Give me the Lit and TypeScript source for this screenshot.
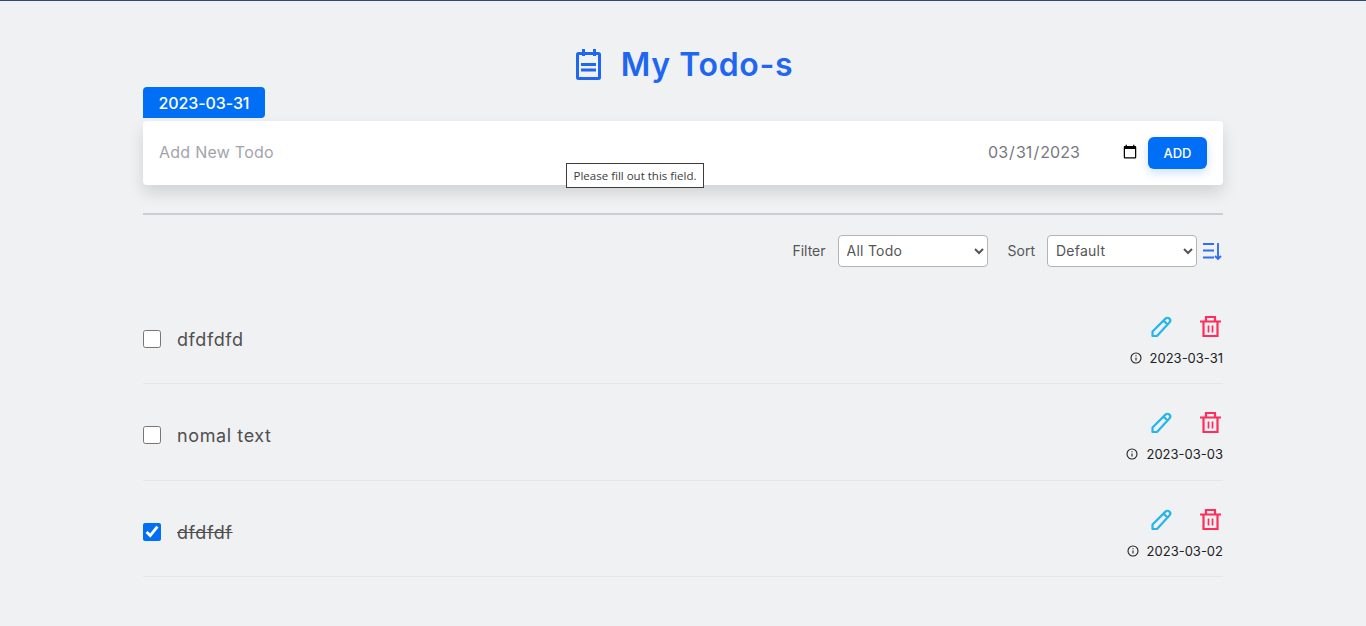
import { LitElement, html, css } from "lit";
import { customElement } from "lit/decorators.js";

const todos = [
  { text: "dfdfdfd", date: "2023-03-31", done: false },
  { text: "nomal text", date: "2023-03-03", done: false },
  { text: "dfdfdf", date: "2023-03-02", done: true },
];

@customElement("app-root")
export class AppRoot extends LitElement {
  static styles = css`
    :host {
      display: block;
      min-height: 626px;
      box-sizing: border-box;
      background: #eff1f3;
      border-top: 1px solid #2a4b78;
      font-family: Inter, "Open Sans", sans-serif;
      color: #4b4b4b;
      overflow: hidden;
    }
    * { box-sizing: border-box; }
    .wrap { width: 1080px; margin: 0 auto; position: relative; }
    h1 {
      margin: 0;
      height: 86px;
      padding-top: 41px;
      display: flex;
      justify-content: center;
      align-items: center;
      gap: 18px;
      padding-left: 2px;
      color: #1f67f0;
      font-size: 32px;
      font-weight: 600;
      line-height: 46px;
      letter-spacing: 0.65px;
    }
    h1 svg { width: 28px; height: 32px; margin-top: -1px; display: block; }
    .tag {
      display: flex; align-items: center; justify-content: center;
      width: 122px; height: 31px;
      background: #006ef5; color: #fff;
      border-radius: 4px 4px 4px 0;
      font-size: 16px; font-weight: 500;
      letter-spacing: -.1px;
    }
    .card {
      margin-top: 3px;
      height: 64px;
      background: #fff;
      border-radius: 4px;
      box-shadow: 0 8px 16px rgba(0,0,0,.13);
      display: flex; align-items: center;
      padding: 0 16px;
    }
    .new {
      flex: 1; border: 0; outline: 0; background: none; font: inherit; font-size: 16px;
      padding: 0 0 2px; letter-spacing: .25px;
    }
    .new::placeholder { color: #a3a3ad; }
    .date {
      width: 160px; border: 0; outline: 0; background: none;
      font: inherit; font-size: 16px; color: #77777f; padding: 0 0 2px 7px; margin-right: 8px; letter-spacing: .05px;
    }
    .add {
      width: 59px; height: 32px; border: 0; border-radius: 6px;
      background: #006ef5; color: #fff; font: inherit; font-size: 13px; font-weight: 500;
      box-shadow: 0 4px 10px rgba(0,110,245,.2);
    }
    .tip {
      position: absolute; left: 423px; top: 162px;
      width: 138px; height: 25px;
      background: #fff; border: 1px solid #3c3c3c;
      font-family: "Open Sans", sans-serif; font-size: 11.5px; color: #3c3c3c;
      display: flex; align-items: center; justify-content: center;
      white-space: nowrap;
    }
    hr { margin: 28px 0 0; border: 0; height: 2px; background: #cbcdd0; }
    .filters {
      margin-top: 20px; height: 32px;
      display: flex; align-items: center; justify-content: flex-end;
      font-size: 14px;
    }
    .filters label { margin-right: 12px; color: #555; padding-bottom: 2px; }
    select {
      width: 150px; height: 32px; background: #fff; color: #555;
      border: 1px solid #b4b4b4; border-radius: 4px;
      font: inherit; font-size: 14px; padding: 0 4px 1px; letter-spacing: .25px;
    }
    .f1 { margin-right: 20px; }
    .sorticon { width: 20px; height: 20px; margin-left: 6px; color: #2f6ff0; display: block; }
    ul { list-style: none; margin: 20px 0 0; padding: 0; }
    li {
      height: 97px; padding-top: 8px; border-bottom: 1px solid #e4e6e8;
      display: flex; align-items: center; justify-content: space-between;
    }
    li:nth-child(2) { padding-top: 6px; }
    li:nth-child(3) { height: 96px; padding-top: 7px; }
    .left { display: flex; align-items: center; gap: 16px; font-size: 18px; color: #4f4f4f; margin-top: 1px; letter-spacing: .6px; }
    input[type=checkbox] { width: 18px; height: 18px; margin: 0 0 2px; accent-color: #006ef5; }
    .done { text-decoration: line-through; }
    .right { display: flex; flex-direction: column; align-items: flex-end; gap: 11px; margin-top: 3px; }
    .acts { display: flex; gap: 26px; }
    .acts svg { width: 24px; height: 24px; display: block; }
    .pen { color: #27b5e8; }
    .trash { color: #ff2d5b; }
    .when { display: flex; align-items: center; gap: 8px; font-size: 13px; color: #222; }
    .when svg { width: 12px; height: 12px; display: block; }
  `;

  render() {
    return html`
      <div class="wrap">
        <h1>
          <svg viewBox="0 0 28 32" fill="none" stroke="currentColor" stroke-width="3">
            <rect x="2.5" y="5.5" width="22" height="25" rx="1"/>
            <path d="M8.5 1v7M19.5 1v7M6 16.5h15M6 22h15"/>
          </svg>
          My Todo-s
        </h1>
        <div class="tag">2023-03-31</div>
        <div class="card">
          <input class="new" placeholder="Add New Todo" />
          <input class="date" type="date" value="2023-03-31" />
          <button class="add">ADD</button>
        </div>
        <div class="tip">Please fill out this field.</div>
        <hr />
        <div class="filters">
          <label>Filter</label>
          <select class="f1"><option>All Todo</option></select>
          <label>Sort</label>
          <select><option>Default</option></select>
          <svg class="sorticon" viewBox="0 0 20 20" fill="none" stroke="currentColor" stroke-width="1.9">
            <path d="M0 3h11M0 9.5h11M0 16.5h11M15 2v16M12 15l3 3 3-3"/>
          </svg>
        </div>
        <ul>
          ${todos.map((t) => html`
            <li>
              <div class="left">
                <input type="checkbox" .checked=${t.done} />
                <span class=${t.done ? "done" : ""}>${t.text}</span>
              </div>
              <div class="right">
                <div class="acts">
                  <svg class="pen" viewBox="0 0 24 24" fill="none" stroke="currentColor" stroke-width="2.2" stroke-linejoin="round" stroke-linecap="round">
                    <path d="M3.5 21v-4.5L16.5 3.6a2.3 2.3 0 0 1 3.9 3.9L8 21H3.5zM15 6l3.5 3.5"/>
                  </svg>
                  <svg class="trash" viewBox="0 0 24 24" fill="none" stroke="currentColor" stroke-width="2.2">
                    <path d="M1 6.5h21M7 6.5V2h9v4.5M4.5 6.5V21h14V6.5"/>
                    <path d="M9.5 10.5v7M13.5 10.5v7" stroke-width="1.7"/>
                  </svg>
                </div>
                <div class="when">
                  <svg viewBox="0 0 12 12" fill="none" stroke="currentColor" stroke-width="1.1">
                    <circle cx="6" cy="6" r="5"/><path d="M6 5.5v3M6 3.2v1"/>
                  </svg>
                  ${t.date}
                </div>
              </div>
            </li>`)}
        </ul>
      </div>
    `;
  }
}
